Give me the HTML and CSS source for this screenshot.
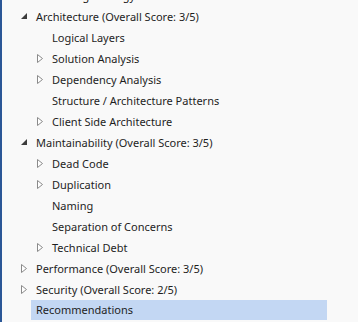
FILE: index.html
```html
<!DOCTYPE html>
<html>
<head>
<meta charset="utf-8">
<link rel="stylesheet" href="styles.css">
</head>
<body>
<div class="panel">
  <div class="tree">
    <div class="row l2"><span class="tog"></span><span class="label">Testing Strategy</span></div>
    <div class="row l1"><span class="tog"><svg width="7" height="7" viewBox="0 0 7 7"><polygon points="6,0 6,6 0,6" class="exp"/></svg></span><span class="label">Architecture (Overall Score: 3/5)</span></div>
    <div class="row l2"><span class="tog"></span><span class="label">Logical Layers</span></div>
    <div class="row l2"><span class="tog"><svg width="7" height="10" viewBox="0 0 7 10"><polygon points="0.5,0.5 5.5,4.5 0.5,8.5" class="col"/></svg></span><span class="label">Solution Analysis</span></div>
    <div class="row l2"><span class="tog"><svg width="7" height="10" viewBox="0 0 7 10"><polygon points="0.5,0.5 5.5,4.5 0.5,8.5" class="col"/></svg></span><span class="label">Dependency Analysis</span></div>
    <div class="row l2"><span class="tog"></span><span class="label">Structure / Architecture Patterns</span></div>
    <div class="row l2"><span class="tog"><svg width="7" height="10" viewBox="0 0 7 10"><polygon points="0.5,0.5 5.5,4.5 0.5,8.5" class="col"/></svg></span><span class="label">Client Side Architecture</span></div>
    <div class="row l1"><span class="tog"><svg width="7" height="7" viewBox="0 0 7 7"><polygon points="6,0 6,6 0,6" class="exp"/></svg></span><span class="label">Maintainability (Overall Score: 3/5)</span></div>
    <div class="row l2"><span class="tog"><svg width="7" height="10" viewBox="0 0 7 10"><polygon points="0.5,0.5 5.5,4.5 0.5,8.5" class="col"/></svg></span><span class="label">Dead Code</span></div>
    <div class="row l2"><span class="tog"><svg width="7" height="10" viewBox="0 0 7 10"><polygon points="0.5,0.5 5.5,4.5 0.5,8.5" class="col"/></svg></span><span class="label">Duplication</span></div>
    <div class="row l2"><span class="tog"></span><span class="label">Naming</span></div>
    <div class="row l2"><span class="tog"></span><span class="label">Separation of Concerns</span></div>
    <div class="row l2"><span class="tog"><svg width="7" height="10" viewBox="0 0 7 10"><polygon points="0.5,0.5 5.5,4.5 0.5,8.5" class="col"/></svg></span><span class="label">Technical Debt</span></div>
    <div class="row l1"><span class="tog"><svg width="7" height="10" viewBox="0 0 7 10"><polygon points="0.5,0.5 5.5,4.5 0.5,8.5" class="col"/></svg></span><span class="label">Performance (Overall Score: 3/5)</span></div>
    <div class="row l1"><span class="tog"><svg width="7" height="10" viewBox="0 0 7 10"><polygon points="0.5,0.5 5.5,4.5 0.5,8.5" class="col"/></svg></span><span class="label">Security (Overall Score: 2/5)</span></div>
    <div class="row l1 selected"><span class="tog"></span><span class="label">Recommendations</span></div>
  </div>
</div>
</body>
</html>
```
FILE: styles.css
```css
html, body {
  margin: 0;
  padding: 0;
  width: 358px;
  height: 322px;
  overflow: hidden;
  background: #f9f9f9;
}
.panel {
  height: 322px;
  border-left: 2px solid #2b5797;
  box-sizing: border-box;
  overflow: hidden;
  font-family: "Noto Sans", "Open Sans", sans-serif;
  font-size: 11px;
  color: #1e1e1e;
}
.tree {
  margin-top: -15px;
}
.row {
  display: flex;
  align-items: center;
  height: 21px;
  white-space: nowrap;
}
.row.l1 { padding-left: 14px; }
.row.l2 { padding-left: 30px; }
.tog {
  width: 16px;
  height: 21px;
  display: flex;
  align-items: center;
  justify-content: center;
  flex: none;
}
.tog svg { display: block; }
.exp { fill: #3c3c3c; }
.col { fill: #ffffff; stroke: #8a8a8a; stroke-width: 1; }
.label {
  padding-left: 4px;
  line-height: 21px;
}
.row.selected .label {
  background: #c3d7f3;
  margin-left: -1px;
  padding-left: 5px;
  width: 291px;
  height: 20px;
  line-height: 20px;
  align-self: flex-start;
}
```
